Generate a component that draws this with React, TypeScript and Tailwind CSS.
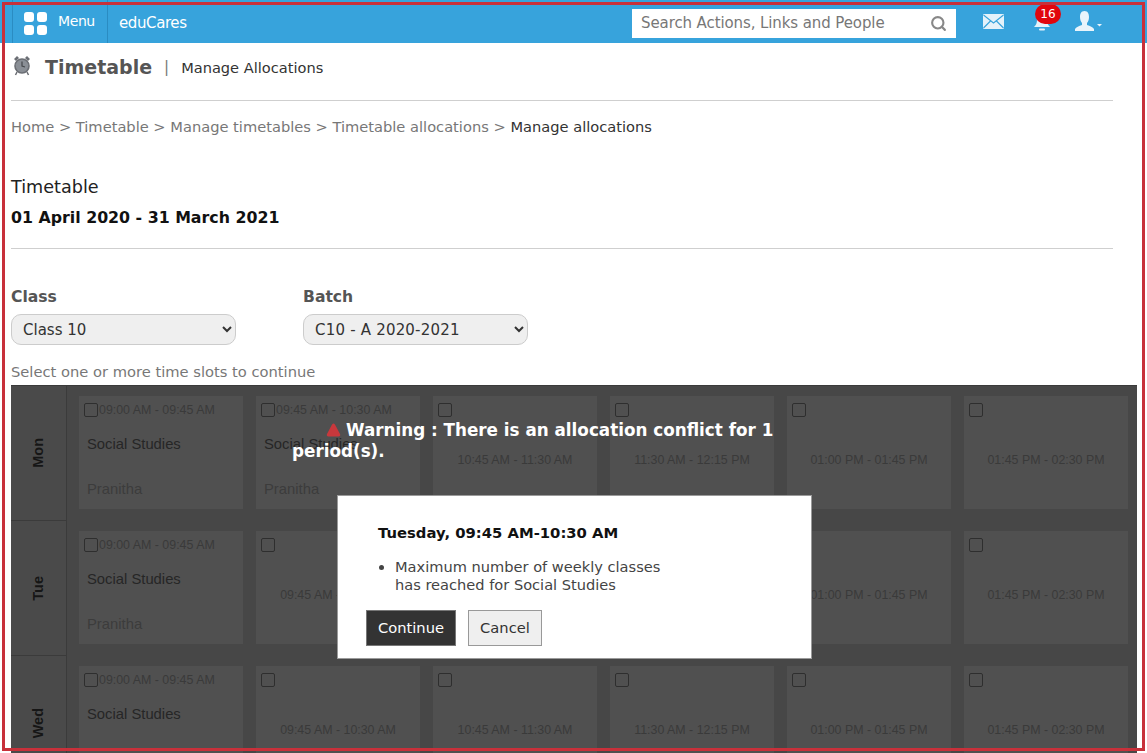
import { useState } from 'react';
import { FiSearch } from 'react-icons/fi';

const slots = [
  '09:00 AM - 09:45 AM',
  '09:45 AM - 10:30 AM',
  '10:45 AM - 11:30 AM',
  '11:30 AM - 12:15 PM',
  '01:00 PM - 01:45 PM',
  '01:45 PM - 02:30 PM',
];

const rows = [
  { day: 'Mon', taken: [0, 1] },
  { day: 'Tue', taken: [0] },
  { day: 'Wed', taken: [0] },
];

function Slot({ time, taken }: { time: string; taken: boolean }) {
  const box = (
    <input
      type="checkbox"
      className="appearance-none w-[14px] h-[14px] shrink-0 rounded-[2px] border border-[#2e2e2e] bg-transparent"
    />
  );
  if (taken) {
    return (
      <div className="bg-[#505050] h-[113px] px-[5px] pt-[7px] font-['Liberation_Sans',sans-serif]">
        <div className="flex items-center gap-[1px] text-[12.4px] leading-[14px] text-[#3a3a3a]">
          {box}
          <span>{time}</span>
        </div>
        <div className="mt-[18px] pl-[3px] text-[14.8px] leading-[18px] text-[#262626]">Social Studies</div>
        <div className="mt-[27px] pl-[3px] text-[14.8px] leading-[18px] text-[#3c3c3c]">Pranitha</div>
      </div>
    );
  }
  return (
    <div className="relative bg-[#505050] h-[113px] px-[5px] pt-[7px] font-['Liberation_Sans',sans-serif]">
      <div className="flex h-[14px]">{box}</div>
      <div className="mt-[35px] text-center text-[12.4px] leading-[16px] text-[#3a3a3a]">{time}</div>
    </div>
  );
}

export default function App() {
  const [klass] = useState('Class 10');
  const [batch] = useState('C10 - A 2020-2021');

  return (
    <div className="relative w-[1147px] h-[753px] overflow-hidden bg-white font-['DejaVu_Sans',sans-serif]">
      {/* top bar */}
      <div className="flex items-center h-[43px] bg-[#37a3dc] pl-3 text-white">
        <div className="flex items-center h-full w-[96px] border-x border-[#2a8cc2] pl-[11px]">
          <svg className="mt-[3px]" width="23" height="23" viewBox="0 0 23 23" fill="#fff">
            <rect x="0" y="0" width="10" height="10" rx="3" />
            <rect x="13" y="0" width="10" height="10" rx="3" />
            <rect x="0" y="13" width="10" height="10" rx="3" />
            <rect x="13" y="13" width="10" height="10" rx="3" />
          </svg>
          <span className="ml-[11px] -mt-[1px] text-[14px] tracking-[-0.4px]">Menu</span>
        </div>
        <span className="ml-[11px] mt-[3px] text-[15px] tracking-[-0.4px]">eduCares</span>
        <div className="ml-auto mt-[4px] flex items-center w-[324px] h-[29px] bg-white pl-[9px] pr-[9px] text-[#777]">
          <span className="text-[15px] tracking-[-0.1px] flex-1">Search Actions, Links and People</span>
          <FiSearch className="text-[#888] text-[17px]" strokeWidth={3} />
        </div>
        <svg className="ml-[27px]" width="21" height="15" viewBox="0 0 21 15">
          <rect x="0" y="0" width="21" height="15" rx="1" fill="#e4f2fa" />
          <path d="M0.5 1 L10.5 9 L20.5 1 M0.5 14 L7.5 7 M20.5 14 L13.5 7" stroke="#37a3dc" strokeWidth="1.1" fill="none" />
        </svg>
        <div className="relative ml-[28px] w-[20px] h-[20px]">
          <svg width="20" height="20" viewBox="0 0 20 20" fill="#e4f2fa">
            <path d="M10 2 C6 2 5 5 5 8 C5 11 4 13 2 15 L18 15 C16 13 15 11 15 8 C15 5 14 2 10 2 Z" />
            <rect x="7" y="16.5" width="6" height="2" rx="1" />
          </svg>
          <span className="absolute -top-[8px] left-[3px] flex items-center justify-center w-[26px] h-[20px] rounded-full bg-[#e1060d] text-white text-[12px]">
            16
          </span>
        </div>
        <svg className="ml-[23px] mr-[44px]" width="28" height="21" viewBox="0 0 28 21" fill="#e9f4fb">
          <path d="M9.5 0 C13 0 14 3 14 6 C14 9 13 11 12 12 L12 14 C15 15 18 16 19 18 L19 20 L0 20 L0 18 C1 16 4 15 7 14 L7 12 C6 11 5 9 5 6 C5 3 6 0 9.5 0 Z" />
          <path d="M22 13 L27 13 L24.5 15.5 Z" />
        </svg>
      </div>

      {/* page body */}
      <div className="pl-[11px] pr-[34px]">
        <div className="flex items-center h-[58px] pb-[8px] border-b border-[#cfcfcf]">
          <svg className="ml-[2px] -mt-[4px]" width="18" height="21" viewBox="0 0 18 21">
            <circle cx="9" cy="11" r="7" fill="#8a8f96" stroke="#6b6e74" strokeWidth="1.6" />
            <path d="M9 6.5 L9 11 L12 12" stroke="#44474b" strokeWidth="1.2" fill="none" />
            <path d="M1 4 L4 1 L6 3 L3 6 Z M17 4 L14 1 L12 3 L15 6 Z" fill="#6b6e74" />
            <path d="M4 17 L2.5 20 M14 17 L15.5 20" stroke="#6b6e74" strokeWidth="1.5" />
          </svg>
          <h1 className="ml-[14px] text-[19px] font-bold text-[#555]">Timetable</h1>
          <span className="ml-[12px] text-[15px] text-[#777]">|</span>
          <span className="ml-[12px] text-[14.6px] text-[#333]">Manage Allocations</span>
        </div>

        <div className="mt-[17px] text-[14.65px] leading-[18px] text-[#777]">
          Home &gt; Timetable &gt; Manage timetables &gt; Timetable allocations &gt;{' '}
          <span className="text-[#333]">Manage allocations</span>
        </div>

        <div className="mt-[41px] text-[17.6px] leading-[20px] text-[#222]">Timetable</div>
        <div className="mt-[11px] text-[15.8px] leading-[20px] font-bold text-[#111]">01 April 2020 - 31 March 2021</div>

        <div className="mt-[20px] border-b border-[#cfcfcf]" />

        <div className="flex gap-[67px] mt-[38px]">
          <label className="block w-[225px]">
            <div className="text-[15.6px] leading-[20px] font-bold text-[#555]">Class</div>
            <select
              value={klass}
              onChange={() => {}}
              className="mt-[7px] w-full h-[31px] pl-[7px] rounded-[10px] border border-[#ccc] bg-[#efefef] text-[15px] text-[#333]"
            >
              <option>Class 10</option>
            </select>
          </label>
          <label className="block w-[225px]">
            <div className="text-[15.6px] leading-[20px] font-bold text-[#555]">Batch</div>
            <select
              value={batch}
              onChange={() => {}}
              className="mt-[7px] w-full h-[31px] pl-[7px] rounded-[10px] border border-[#ccc] bg-[#efefef] text-[15px] tracking-[0.2px] text-[#333]"
            >
              <option>C10 - A 2020-2021</option>
            </select>
          </label>
        </div>

        <div className="mt-[18px] text-[14.7px] leading-[18px] text-[#777]">Select one or more time slots to continue</div>
      </div>

      {/* timetable, dimmed by the dialog */}
      <div className="ml-[11px] mt-[4px] w-[1126px] bg-[#474747] border-t border-[#3a3a3a]">
        {rows.map((row) => (
          <div key={row.day} className="flex h-[135px]">
            <div className="flex items-center justify-center w-[56px] shrink-0 border-r border-b border-[#3b3b3b] bg-[#4a4a4a]">
              <span className="[writing-mode:vertical-rl] rotate-180 font-['Liberation_Sans',sans-serif] font-bold text-[14.5px] text-[#161616]">
                {row.day}
              </span>
            </div>
            <div className="grid grid-cols-6 gap-x-[13px] flex-1 pl-[12px] pr-[9px] pt-[10px]">
              {slots.map((time, i) => (
                <Slot key={time} time={time} taken={row.taken.includes(i)} />
              ))}
            </div>
          </div>
        ))}
      </div>

      {/* warning text over the grid */}
      <div className="absolute left-[292px] top-[420px] w-[490px] indent-[34px] text-[16.8px] leading-[21px] font-bold text-white">
        <svg className="inline-block mr-[5px] mb-[2px]" width="15" height="14" viewBox="0 0 15 14">
          <path d="M7.5 0.5 C8.5 0.5 9 1.5 9.5 2.5 L14 11 C14.6 12.5 14 13.5 12.5 13.5 L2.5 13.5 C1 13.5 0.4 12.5 1 11 L5.5 2.5 C6 1.5 6.5 0.5 7.5 0.5 Z" fill="#c9383c" />
        </svg>
        Warning : There is an allocation conflict for 1 period(s).
      </div>

      {/* dialog */}
      <div className="absolute left-[337px] top-[495px] w-[475px] h-[164px] bg-white border border-[#9a9a9a]">
        <div className="ml-[40px] mt-[27px] text-[14.8px] leading-[20px] font-bold text-[#111]">Tuesday, 09:45 AM-10:30 AM</div>
        <ul className="ml-[57px] mt-[15px] w-[280px] list-disc text-[14.6px] leading-[18px] text-[#444]">
          <li>Maximum number of weekly classes has reached for Social Studies</li>
        </ul>
        <div className="flex gap-[12px] ml-[28px] mt-[16px]">
          <button className="w-[90px] h-[36px] bg-[#333] border border-[#777] text-white text-[14.7px]">Continue</button>
          <button className="w-[74px] h-[36px] bg-[#efefef] border border-[#999] text-[#333] text-[14.7px]">Cancel</button>
        </div>
      </div>

      {/* red annotation frame */}
      <div className="absolute left-[2px] top-[2px] w-[1143px] h-[749px] border-[3px] border-[#c8303a] pointer-events-none" />
    </div>
  );
}
